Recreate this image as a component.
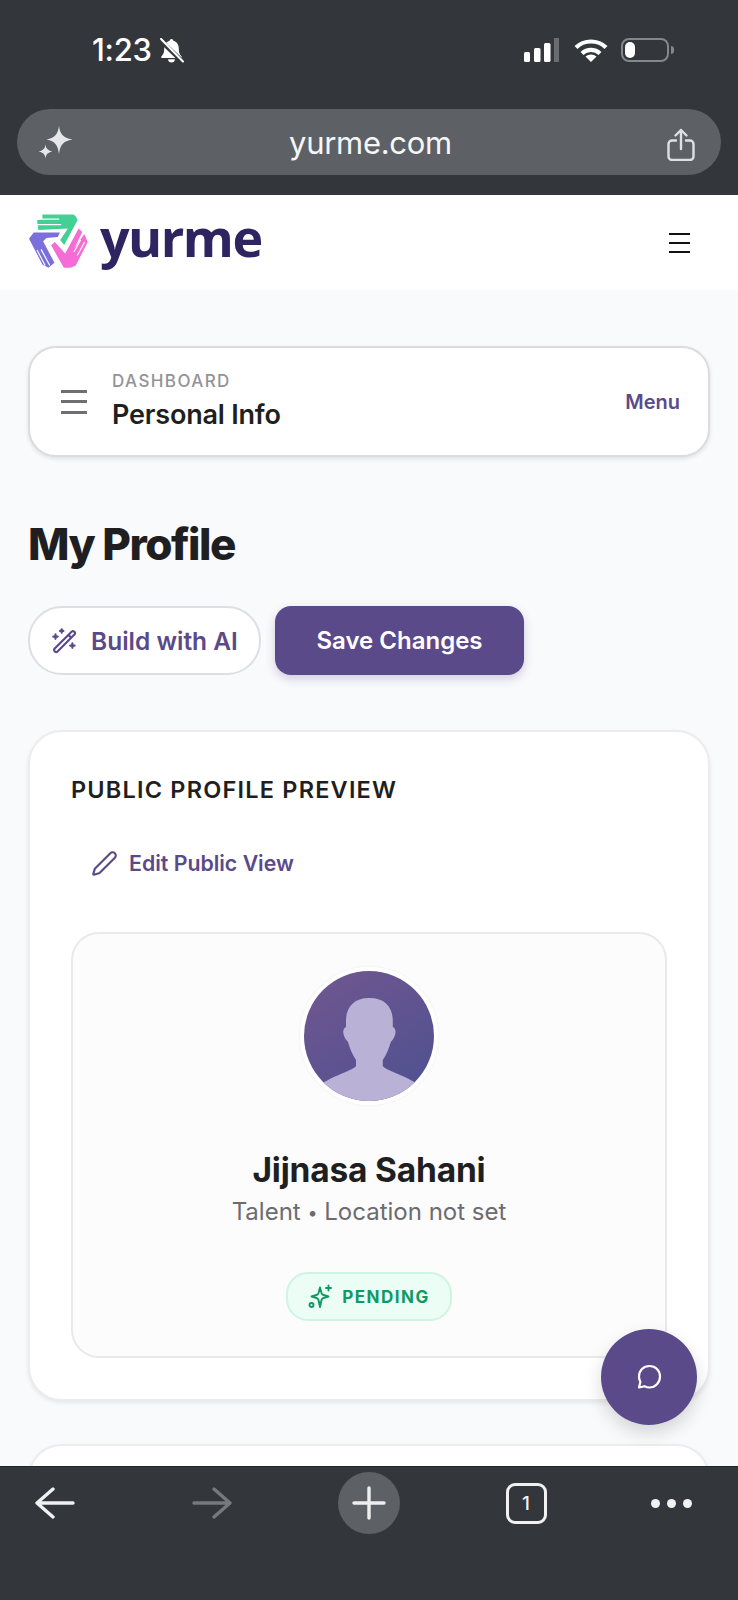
<div class="phone">
  <header class="chrome">
    <div class="status">
      <div class="left">
        <span class="time">1:23</span>
        <svg class="bell" viewBox="0 0 24 24" width="25" height="25">
          <path fill="#fff" d="M12 1c-1 0-1.700.7-1.800 1.600C7 3.500 5 6.200 5 10c0 4.600-1.200 6-2.600 7.400-.6.7-.2 1.800.8 1.800h17.600c1 0 1.400-1.100.8-1.800C20.200 16 19 14.600 19 10c0-3.800-2-6.500-5.200-7.400C13.700 1.700 13 1 12 1zM8.800 20.400a3.200 3.200 0 0 0 6.400 0z"/>
          <path stroke="#33363a" stroke-width="4.500" d="M1 2l22 21"/>
          <path stroke="#fff" stroke-width="2" stroke-linecap="round" d="M2 1l21 21.500"/>
        </svg>
      </div>
      <div class="right">
        <svg width="34" height="24" viewBox="0 0 34 24">
          <rect x="0" y="14" width="6" height="10" rx="1.500" fill="#fff"/>
          <rect x="10" y="10" width="6.500" height="14" rx="1.500" fill="#fff"/>
          <rect x="20" y="5" width="6.500" height="19" rx="1.500" fill="#fff"/>
          <rect x="30" y="0" width="5" height="24" fill="#6a6d70"/>
        </svg>
        <svg class="wifi" width="34" height="24" viewBox="0 0 34 24">
          <path fill="none" stroke="#fff" stroke-width="4.200" d="M2 9.500C10 1.500 24 1.500 32 9.500"/>
          <path fill="none" stroke="#fff" stroke-width="4.200" d="M8 15.500c5-4.800 13-4.800 18 0"/>
          <path fill="#fff" d="M11.500 18.500c3-2.800 8-2.800 11 0L17 24z"/>
        </svg>
        <div class="battery"><div class="charge"></div></div>
        <div class="nub"></div>
      </div>
    </div>
    <div class="urlbar">
      <svg class="spark" width="36" height="36" viewBox="0 0 36 36">
        <path fill="#e6e7e8" d="M21 1c1.200 8 3.500 11.500 13.500 13.500C24.500 16.500 22.200 20 21 29c-1.200-9-3.500-12.500-12.500-14.500C17.500 12.500 19.800 9 21 1z"/>
        <path fill="#e6e7e8" d="M7.500 19.500c.6 4.200 2 5.800 6.800 7-4.800 1.200-6.200 2.800-6.800 7-.6-4.200-2-5.800-6.800-7 4.800-1.200 6.200-2.800 6.800-7z"/>
      </svg>
      <span class="url">yurme.com</span>
      <svg class="share" width="28" height="33" viewBox="0 0 28 33" fill="none" stroke="#dfe0e1" stroke-width="2.400">
        <path stroke-linecap="round" stroke-linejoin="round" d="M14 21V2M8.500 7.500 14 2l5.500 5.500"/>
        <path stroke-linecap="round" d="M9 12.500H5a3.500 3.500 0 0 0-3.500 3.500v12.500A3.500 3.500 0 0 0 5 32h18a3.500 3.500 0 0 0 3.500-3.500V16a3.500 3.500 0 0 0-3.500-3.500h-4"/>
      </svg>
    </div>
  </header>

  <nav class="topnav">
    <div class="brand">
      <svg class="mark" width="59" height="54" viewBox="42 45 176 160">
        <path fill="#44cf95" d="M82 46H172Q180 46 187 62L147 137 135 122 158 88 70 92 66 64 82 58z"/>
        <path fill="#7b6fdb" d="M42 118 56 100H134L128 113 94 116 84 126 118 190 100 205 82 195z"/>
        <path fill="#f56cd6" d="M108 138 119 128 150 162 190 88 201 98 178 146 207 104 217 128 181 199 166 205H146z"/>
        <g stroke="#fff" stroke-width="3.500" fill="none">
          <path d="M60 60H132M60 76H138"/>
          <path d="M78 150 104 198M66 152 90 198"/>
          <path d="M196 122 176 158M208 128 186 168"/>
        </g>
      </svg>
      <span class="word">yurme</span>
    </div>
    <div class="burger"><i></i><i></i><i></i></div>
  </nav>

  <main class="content">
    <section class="crumb">
      <div class="crumb-lines"><i></i><i></i><i></i></div>
      <div class="crumb-text">
        <div class="eyebrow">DASHBOARD</div>
        <div class="crumb-title">Personal Info</div>
      </div>
      <span class="crumb-menu">Menu</span>
    </section>

    <h1>My Profile</h1>

    <div class="actions">
      <button class="ai">
        <svg width="27" height="27" viewBox="0 0 24 24" fill="none" stroke="#5b4a8a" stroke-width="1.900" stroke-linecap="round" stroke-linejoin="round">
          <path d="M3.300 19.200 18.300 4.200a1.700 1.700 0 0 1 2.400 0l.1.100a1.700 1.700 0 0 1 0 2.400l-15 15a1.700 1.700 0 0 1-2.400 0l-.1-.100a1.700 1.700 0 0 1 0-2.400zM15.500 7l2.500 2.500"/>
          <path d="M9.500 2v3M8 3.500h3M4 6.500v4M2 8.500h4M19 14.500v4M17 16.500h4"/>
        </svg>
        Build with AI
      </button>
      <button class="save">Save Changes</button>
    </div>

    <section class="card">
      <h2>PUBLIC PROFILE PREVIEW</h2>
      <div class="edit">
        <svg width="27" height="27" viewBox="0 0 24 24" fill="none" stroke="#5b4a8a" stroke-width="1.900" stroke-linecap="round" stroke-linejoin="round">
          <path d="M21.200 6.800a2.800 2.800 0 0 0-4-4L3.800 16.200a2 2 0 0 0-.5.800l-1.300 4.400a.5.500 0 0 0 .6.600l4.400-1.300a2 2 0 0 0 .8-.5z"/>
        </svg>
        <span>Edit Public View</span>
      </div>
      <div class="inner">
        <div class="avatar">
          <svg width="130" height="130" viewBox="0 0 130 130">
            <defs>
              <linearGradient id="av" x1="0.150" y1="0" x2="0.850" y2="1">
                <stop offset="0" stop-color="#6f5690"/>
                <stop offset="1" stop-color="#4f5190"/>
              </linearGradient>
            </defs>
            <rect width="130" height="130" fill="url(#av)"/>
            <path fill="#b9b2d6" d="M65 27c-15 0-23 9-23 23v6c-2.500 1-3.200 4-2.500 7 .7 3 2.500 6 4.500 8 2 7 4.500 13 8 18v6c-2 4-21 9-33 17v18h92.800v-18c-12-8-31-13-33-17v-6c3.500-5 6-11 8-18 2-2 3.800-5 4.500-8 .7-3 0-6-2.500-7v-6c0-14-8-23-23-23z"/>
          </svg>
        </div>
        <div class="name">Jijnasa Sahani</div>
        <div class="meta">Talent <span class="dot">•</span> Location not set</div>
        <div class="pill">
          <svg width="25" height="25" viewBox="0 0 25 25" fill="none" stroke="#0f9a63" stroke-width="1.900" stroke-linecap="round" stroke-linejoin="round">
            <path d="M12 3.500 13.500 9c.3 1 1 1.700 2 2l5 1.500-5 1.500c-1 .3-1.700 1-2 2L12 23l-1.500-7c-.3-1-1-1.700-2-2l-5-1.500 5-1.500c1-.3 1.700-1 2-2z"/>
            <path d="M20.500 1.500v5M18 4h5"/>
            <circle cx="3.500" cy="21" r="2"/>
          </svg>
          <span>PENDING</span>
        </div>
      </div>
    </section>

    <section class="card next"></section>
  </main>

  <button class="fab" aria-label="Chat">
    <svg width="30" height="30" viewBox="0 0 30 30" fill="none" stroke="#fff" stroke-width="2.200" stroke-linejoin="round">
      <path d="M15.500 4C9.500 4 5 8.500 5 14.500c0 2 .5 3.700 1.400 5.300L5 25.500l5.500-1.300c1.500.8 3.200 1.300 5 1.300C21.500 25.500 26 20.500 26 14.500S21.500 4 15.500 4z"/>
    </svg>
  </button>

  <footer class="toolbar">
    <svg width="40" height="32" viewBox="0 0 40 32" fill="none" stroke="#f1f1f2" stroke-width="3.400" stroke-linecap="round" stroke-linejoin="round">
      <path d="M38 16H3M18 2 2 16l16 14"/>
    </svg>
    <svg width="40" height="32" viewBox="0 0 40 32" fill="none" stroke="#77797c" stroke-width="3.400" stroke-linecap="round" stroke-linejoin="round">
      <path d="M2 16h35M22 2l16 14-16 14"/>
    </svg>
    <div class="plus">
      <svg width="34" height="34" viewBox="0 0 34 34" stroke="#eeeeef" stroke-width="3.400" stroke-linecap="round">
        <path d="M17 2v30M2 17h30"/>
      </svg>
    </div>
    <div class="tabs">1</div>
    <div class="dots"><i></i><i></i><i></i></div>
  </footer>
</div>

<style>
  :global(body) {
    margin: 0;
    background: #f9fafc;
    font-family: "Inter", "Liberation Sans", sans-serif;
  }
  .phone {
    position: relative;
    width: 738px;
    height: 1600px;
    overflow: hidden;
    display: flex;
    flex-direction: column;
    background: #f9fafc;
  }
  .chrome {
    height: 195px;
    box-sizing: border-box;
    flex: none;
    background: #33363a;
    padding-top: 36px;
  }
  .status {
    display: flex;
    justify-content: space-between;
    align-items: center;
    height: 28px;
    padding: 0 64px 0 92px;
  }
  .left, .right { display: flex; align-items: center; }
  .time { font-size: 31px; font-weight: 500; color: #fff; line-height: 28px; letter-spacing: -0.300px; }
  .bell { margin-left: 7px; }
  .right svg { overflow: visible; }
  .wifi { margin: 0 13px 0 16px; }
  .battery {
    width: 48px;
    height: 24px;
    box-sizing: border-box;
    border: 2px solid #85878a;
    border-radius: 8px;
    padding: 2px;
  }
  .charge { width: 10px; height: 16px; background: #fff; border-radius: 5px; }
  .nub { width: 3px; height: 8px; background: #85878a; border-radius: 0 3px 3px 0; margin-left: 2px; }
  .urlbar {
    margin: 45px 17px 0;
    height: 66px;
    border-radius: 33px;
    background: #5d6165;
    display: flex;
    align-items: center;
    justify-content: space-between;
    padding: 0 26px 0 21px;
  }
  .url { font-size: 31px; color: #f6f6f7; letter-spacing: -0.300px; }
  .spark { margin-top: 2px; }
  .share { margin-top: 4px; }
  .topnav {
    height: 95px;
    flex: none;
    box-sizing: border-box;
    background: #fff;
    display: flex;
    align-items: center;
    justify-content: space-between;
    padding: 0 48px 0 29px;
  }
  .brand { display: flex; align-items: center; gap: 12px; margin-top: -3px; }
  .word {
    font-family: "Open Sans", sans-serif;
    font-size: 52px;
    font-weight: 700;
    line-height: 56px;
    color: #2d2460;
    letter-spacing: -1.500px;
    margin-top: -8px;
  }
  .burger { display: flex; flex-direction: column; gap: 7px; }
  .burger i { display: block; width: 21px; height: 2px; background: #111; }
  .content {
    flex: 1;
    min-height: 0;
    padding: 56px 28px 0;
  }
  .crumb {
    height: 111px;
    box-sizing: border-box;
    background: #fff;
    border: 2px solid #dcdcdf;
    border-radius: 28px;
    box-shadow: 0 2px 4px rgba(0, 0, 0, 0.100);
    display: flex;
    align-items: center;
    padding: 0 28px 0 31px;
  }
  .crumb-lines { display: flex; flex-direction: column; gap: 7.500px; margin-right: 25px; }
  .crumb-lines i { display: block; width: 26px; height: 3px; background: #6f6f72; }
  .crumb-text { flex: 1; }
  .eyebrow { font-size: 17px; color: #939396; font-weight: 500; letter-spacing: 1.400px; line-height: 20px; }
  .crumb-title { font-size: 27px; font-weight: 600; color: #1f1f22; line-height: 34px; margin-top: 7px; letter-spacing: -0.200px; }
  .crumb-menu { font-size: 20px; font-weight: 600; color: #5b4a8a; }
  h1 {
    margin: 62px 0 0;
    font-size: 44px;
    line-height: 50px;
    font-weight: 800;
    color: #1f1f22;
    letter-spacing: -1.500px;
  }
  .actions { display: flex; gap: 14px; margin-top: 37px; align-items: flex-start; }
  button { font-family: inherit; cursor: pointer; }
  .ai {
    width: 233px;
    height: 69px;
    box-sizing: border-box;
    background: #fff;
    border: 2px solid #dedee6;
    border-radius: 34px;
    color: #5b4a8a;
    font-size: 24.500px;
    font-weight: 600;
    display: flex;
    align-items: center;
    gap: 13px;
    padding: 0 0 0 21px;
    white-space: nowrap;
  }
  .save {
    width: 249px;
    height: 69px;
    background: #5b4a8a;
    color: #fff;
    border: 0;
    border-radius: 16px;
    font-size: 24px;
    font-weight: 600;
    box-shadow: 0 4px 10px rgba(91, 74, 138, 0.250);
  }
  .card {
    margin-top: 55px;
    height: 671px;
    box-sizing: border-box;
    background: #fff;
    border: 2px solid #ececef;
    border-radius: 34px;
    box-shadow: 0 2px 4px rgba(0, 0, 0, 0.080);
    padding: 44px 41px 40px;
  }
  h2 {
    margin: 0;
    font-size: 23.500px;
    line-height: 28px;
    font-weight: 600;
    color: #1f1f22;
    letter-spacing: 1.200px;
  }
  .edit {
    display: flex;
    align-items: center;
    gap: 11px;
    margin: 44px 0 0 20px;
    color: #5b4a8a;
    font-size: 21.300px;
    font-weight: 600;
    height: 30px;
  }
  .inner {
    margin-top: 54px;
    height: 426px;
    box-sizing: border-box;
    background: #fcfcfd;
    border: 2px solid #e9e9ed;
    border-radius: 28px;
    display: flex;
    flex-direction: column;
    align-items: center;
    padding-top: 33px;
  }
  .avatar {
    width: 130px;
    height: 130px;
    border-radius: 50%;
    overflow: hidden;
    border: 4px solid #fff;
    box-shadow: 0 0 3px rgba(0, 0, 0, 0.080);
    flex: none;
  }
  .avatar svg { display: block; }
  .name { margin-top: 45px; font-size: 33.500px; font-weight: 650; line-height: 40px; color: #1f1f22; letter-spacing: -0.200px; }
  .meta { margin-top: 6px; font-size: 24px; line-height: 32px; color: #6b6b70; }
  .dot { font-size: 18px; vertical-align: 1px; }
  .pill {
    margin-top: 43px;
    height: 49px;
    width: 166px;
    box-sizing: border-box;
    background: #ecfdf5;
    border: 2px solid #cdf5e2;
    border-radius: 22px;
    display: flex;
    align-items: center;
    justify-content: center;
    gap: 9px;
    color: #0f9a63;
    font-size: 17px;
    font-weight: 700;
    letter-spacing: 1.500px;
  }
  .next { margin-top: 43px; height: 200px; }
  .fab {
    position: absolute;
    left: 601px;
    top: 1329px;
    width: 96px;
    height: 96px;
    border: 0;
    border-radius: 50%;
    background: #5b4a8a;
    box-shadow: 0 8px 18px rgba(0, 0, 0, 0.150);
    display: flex;
    align-items: center;
    justify-content: center;
    padding: 0;
  }
  .toolbar {
    position: absolute;
    left: 0;
    right: 0;
    bottom: 0;
    height: 134px;
    box-sizing: border-box;
    background: #33363a;
    border-top: 1px solid #232527;
    padding: 5px 0 0 35px;
    display: grid;
    grid-template-columns: repeat(5, 40px);
    column-gap: 117px;
    align-items: start;
    justify-items: center;
  }
  .toolbar > svg { margin-top: 15px; }
  .plus {
    width: 62px;
    height: 62px;
    border-radius: 50%;
    background: #5d6165;
    display: flex;
    align-items: center;
    justify-content: center;
  }
  .tabs {
    margin-top: 11px;
    width: 41px;
    height: 41px;
    box-sizing: border-box;
    border: 3px solid #f1f1f2;
    border-radius: 9px;
    color: #f1f1f2;
    font-size: 19px;
    font-weight: 500;
    display: flex;
    align-items: center;
    justify-content: center;
  }
  .dots { display: flex; gap: 7px; margin: 27px 24px 0 0; }
  .dots i { display: block; width: 9px; height: 9px; border-radius: 50%; background: #f1f1f2; }
</style>
